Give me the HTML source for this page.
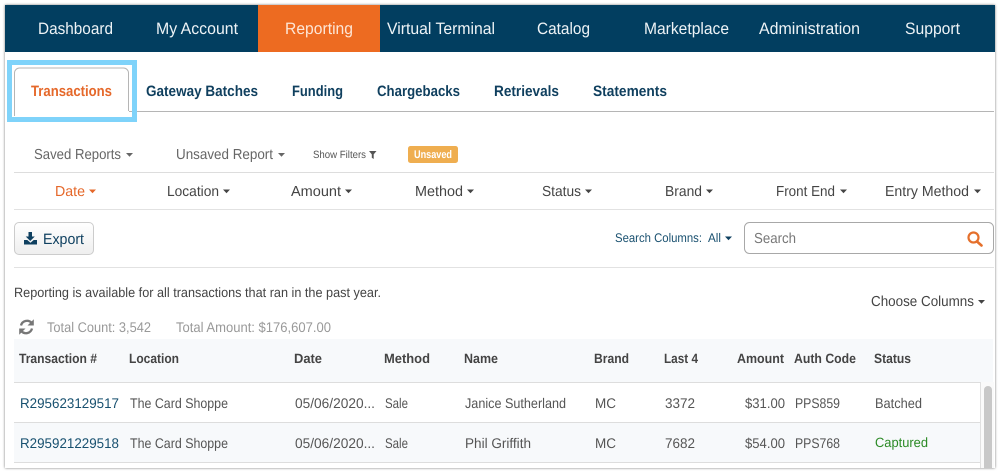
<!DOCTYPE html>
<html lang="en"><head><meta charset="utf-8"><title>Reporting</title>
<style>
html,body{margin:0;padding:0;background:#fff;width:1000px;height:473px;overflow:hidden}
svg{display:block;font-family:"Liberation Sans",sans-serif;filter:blur(.25px)}
text{text-rendering:geometricPrecision}
.n{font-size:16.5px;fill:#eef3f6}
.t{font-size:15px;font-weight:bold;fill:#0f3f5e}
.g{font-size:14.5px;fill:#666}
.f{font-size:14.5px;fill:#444}
.h{font-size:13.5px;font-weight:bold;fill:#444}
.c{font-size:14px;fill:#555}
.l{font-size:14px;fill:#17506f}
</style></head><body>
<svg width="1000" height="473" viewBox="0 0 1000 473" xmlns="http://www.w3.org/2000/svg">
<defs>
<linearGradient id="b" x1="0" y1="0" x2="0" y2="1"><stop offset="0" stop-color="#fff"/><stop offset="1" stop-color="#eeeeee"/></linearGradient>
<filter id="s" x="-2%" y="-2%" width="104%" height="104%"><feDropShadow dx="0" dy="0" flood-color="#000" flood-opacity=".55" stdDeviation="1.2"/></filter>
</defs>
<rect width="1000" height="473" fill="#fff"/>
<rect x="5" y="5" width="990" height="463" fill="#fff" filter="url(#s)"/>

<!-- top nav -->
<rect x="5" y="5" width="990" height="47" fill="#023e60"/>
<rect x="258" y="5" width="122" height="47" fill="#ed6b21"/>
<text class="n" x="38" y="34" textLength="75" lengthAdjust="spacingAndGlyphs">Dashboard</text>
<text class="n" x="156" y="34" textLength="82" lengthAdjust="spacingAndGlyphs">My Account</text>
<text class="n" x="285" y="34" textLength="68" lengthAdjust="spacingAndGlyphs" style="fill:#fde6d6">Reporting</text>
<text class="n" x="387" y="34" textLength="108" lengthAdjust="spacingAndGlyphs">Virtual Terminal</text>
<text class="n" x="537" y="34" textLength="53" lengthAdjust="spacingAndGlyphs">Catalog</text>
<text class="n" x="644" y="34" textLength="85" lengthAdjust="spacingAndGlyphs">Marketplace</text>
<text class="n" x="759" y="34" textLength="101" lengthAdjust="spacingAndGlyphs">Administration</text>
<text class="n" x="905" y="34" textLength="55" lengthAdjust="spacingAndGlyphs">Support</text>

<!-- tabs -->
<line x1="129" y1="111.5" x2="994" y2="111.5" stroke="#b5b5b5"/>
<path d="M14.5 116V73a5 5 0 0 1 5-5h104a5 5 0 0 1 5 5v38" fill="#fff" stroke="#b5b5b5"/>
<rect x="9.5" y="62.5" width="125" height="57" fill="none" stroke="#7fd3fa" stroke-width="5"/>
<text class="t" x="31" y="96" textLength="81" lengthAdjust="spacingAndGlyphs" style="fill:#e5682a">Transactions</text>
<text class="t" x="146" y="96" textLength="112" lengthAdjust="spacingAndGlyphs">Gateway Batches</text>
<text class="t" x="292" y="96" textLength="51" lengthAdjust="spacingAndGlyphs">Funding</text>
<text class="t" x="377" y="96" textLength="83" lengthAdjust="spacingAndGlyphs">Chargebacks</text>
<text class="t" x="494" y="96" textLength="65" lengthAdjust="spacingAndGlyphs">Retrievals</text>
<text class="t" x="593" y="96" textLength="74" lengthAdjust="spacingAndGlyphs">Statements</text>

<!-- report row -->
<text class="g" x="34" y="159" textLength="87" lengthAdjust="spacingAndGlyphs">Saved Reports</text>
<path d="M126 153h7l-3.500 3.800z" fill="#666"/>
<text class="g" x="176" y="159" textLength="97" lengthAdjust="spacingAndGlyphs">Unsaved Report</text>
<path d="M278 153h7l-3.500 3.800z" fill="#666"/>
<text x="313" y="158" textLength="53" lengthAdjust="spacingAndGlyphs" font-size="10.500" fill="#555">Show Filters</text>
<path d="M369 151h7.500l-2.800 3.400v4.600l-1.900-1.200v-3.400z" fill="#555"/>
<rect x="408" y="146" width="50" height="17" rx="2.500" fill="#efae50"/>
<text x="414" y="158" textLength="38" lengthAdjust="spacingAndGlyphs" font-size="11" font-weight="bold" fill="#fff">Unsaved</text>
<line x1="14" y1="172.500" x2="994" y2="172.500" stroke="#ddd"/>

<!-- filters -->
<g class="f">
<text class="f" x="55" y="196" textLength="30" lengthAdjust="spacingAndGlyphs" style="fill:#e5682a">Date</text>
<path d="M89 189.500h7l-3.500 3.800z" fill="#e5682a"/>
<text class="f" x="167" y="196" textLength="52" lengthAdjust="spacingAndGlyphs">Location</text>
<path d="M223 189.500h7l-3.500 3.800z" fill="#444"/>
<text class="f" x="291" y="196" textLength="50" lengthAdjust="spacingAndGlyphs">Amount</text>
<path d="M345 189.500h7l-3.500 3.800z" fill="#444"/>
<text class="f" x="415" y="196" textLength="48" lengthAdjust="spacingAndGlyphs">Method</text>
<path d="M467 189.500h7l-3.500 3.800z" fill="#444"/>
<text class="f" x="542" y="196" textLength="39" lengthAdjust="spacingAndGlyphs">Status</text>
<path d="M585 189.500h7l-3.500 3.800z" fill="#444"/>
<text class="f" x="665" y="196" textLength="37" lengthAdjust="spacingAndGlyphs">Brand</text>
<path d="M706 189.500h7l-3.500 3.800z" fill="#444"/>
<text class="f" x="776" y="196" textLength="59" lengthAdjust="spacingAndGlyphs">Front End</text>
<path d="M840 189.500h7l-3.500 3.800z" fill="#444"/>
<text class="f" x="885" y="196" textLength="84" lengthAdjust="spacingAndGlyphs">Entry Method</text>
<path d="M974 189.500h7l-3.500 3.800z" fill="#444"/>
</g>
<line x1="14" y1="209.500" x2="994" y2="209.500" stroke="#e2e2e2"/>

<!-- export -->
<rect x="14.500" y="222.500" width="79" height="32" rx="4.500" fill="url(#b)" stroke="#ccc"/>
<path d="M28.500 232h3.500v4.500h2.800l-4.550 4.500-4.550-4.500h2.800z M24 240h3.300l3.200 2.800 3.200-2.800H37v4.500H24z" fill="#0f4060"/>
<text x="43" y="244" textLength="41" lengthAdjust="spacingAndGlyphs" font-size="15" fill="#0f4060">Export</text>

<!-- search -->
<text x="615" y="242" textLength="87" lengthAdjust="spacingAndGlyphs" font-size="12.500" fill="#1a5170">Search Columns:</text>
<text x="708" y="242" textLength="13" lengthAdjust="spacingAndGlyphs" font-size="12.500" fill="#1a5170">All</text>
<path d="M725 236.500h7l-3.500 3.800z" fill="#0f4060"/>
<rect x="744.500" y="222.500" width="249" height="31" rx="5" fill="#fff" stroke="#a8a8a8"/>
<text x="754" y="243" textLength="42" lengthAdjust="spacingAndGlyphs" font-size="14.500" fill="#777">Search</text>
<circle cx="973.500" cy="237.500" r="5" fill="none" stroke="#e5702c" stroke-width="2.200"/>
<line x1="977" y1="241.500" x2="981.500" y2="245.500" stroke="#e5702c" stroke-width="2.600" stroke-linecap="round"/>
<line x1="14" y1="267.500" x2="994" y2="267.500" stroke="#e2e2e2"/>

<!-- info -->
<text x="14" y="297" textLength="367" lengthAdjust="spacingAndGlyphs" font-size="13.500" fill="#444">Reporting is available for all transactions that ran in the past year.</text>
<text x="871" y="306" textLength="103" lengthAdjust="spacingAndGlyphs" font-size="14.500" fill="#444">Choose Columns</text>
<path d="M978 300h7l-3.500 3.800z" fill="#444"/>
<path d="M21 325.500a6.200 6.200 0 0 1 10.500-2.800" fill="none" stroke="#777" stroke-width="2.300"/>
<path d="M33.800 319.200v6.300h-6.300z" fill="#777"/>
<path d="M32 328.500a6.200 6.200 0 0 1-10.500 2.800" fill="none" stroke="#777" stroke-width="2.300"/>
<path d="M19.200 334.800v-6.300h6.300z" fill="#777"/>
<text x="47" y="332" textLength="104" lengthAdjust="spacingAndGlyphs" font-size="14" fill="#999">Total Count: 3,542</text>
<text x="176" y="332" textLength="155" lengthAdjust="spacingAndGlyphs" font-size="14" fill="#999">Total Amount: $176,607.00</text>

<!-- table header -->
<rect x="14" y="339" width="979" height="43" fill="#f7f9fb"/>
<text class="h" x="19" y="363" textLength="78" lengthAdjust="spacingAndGlyphs">Transaction #</text>
<text class="h" x="129" y="363" textLength="50" lengthAdjust="spacingAndGlyphs">Location</text>
<text class="h" x="294" y="363" textLength="28" lengthAdjust="spacingAndGlyphs">Date</text>
<text class="h" x="384" y="363" textLength="46" lengthAdjust="spacingAndGlyphs">Method</text>
<text class="h" x="464" y="363" textLength="34" lengthAdjust="spacingAndGlyphs">Name</text>
<text class="h" x="594" y="363" textLength="35" lengthAdjust="spacingAndGlyphs">Brand</text>
<text class="h" x="664" y="363" textLength="34" lengthAdjust="spacingAndGlyphs">Last 4</text>
<text class="h" x="737" y="363" textLength="47" lengthAdjust="spacingAndGlyphs">Amount</text>
<text class="h" x="794" y="363" textLength="62" lengthAdjust="spacingAndGlyphs">Auth Code</text>
<text class="h" x="874" y="363" textLength="37" lengthAdjust="spacingAndGlyphs">Status</text>

<!-- table body -->
<rect x="14" y="382" width="966" height="86" fill="#fff"/>
<rect x="14" y="423" width="966" height="39" fill="#f7f9fb"/>
<line x1="14" y1="382.500" x2="980" y2="382.500" stroke="#ddd"/>
<line x1="14" y1="422.500" x2="980" y2="422.500" stroke="#ddd"/>
<line x1="14" y1="462.500" x2="980" y2="462.500" stroke="#ddd"/>
<line x1="980.500" y1="382" x2="980.500" y2="468" stroke="#e0e0e0"/>
<rect x="981" y="382" width="13" height="86" fill="#fafafa"/>
<path d="M984 468V390a4 4 0 0 1 8 0v78z" fill="#c8c8c8"/>

<text class="l" x="20" y="408" textLength="99" lengthAdjust="spacingAndGlyphs">R295623129517</text>
<text class="c" x="130" y="408" textLength="98" lengthAdjust="spacingAndGlyphs">The Card Shoppe</text>
<text class="c" x="295" y="408" textLength="80" lengthAdjust="spacingAndGlyphs">05/06/2020...</text>
<text class="c" x="385" y="408" textLength="23" lengthAdjust="spacingAndGlyphs">Sale</text>
<text class="c" x="465" y="408" textLength="101" lengthAdjust="spacingAndGlyphs">Janice Sutherland</text>
<text class="c" x="595" y="408" textLength="21" lengthAdjust="spacingAndGlyphs">MC</text>
<text class="c" x="665" y="408" textLength="30" lengthAdjust="spacingAndGlyphs">3372</text>
<text class="c" x="745" y="408" textLength="40" lengthAdjust="spacingAndGlyphs">$31.00</text>
<text class="c" x="795" y="408" textLength="45" lengthAdjust="spacingAndGlyphs">PPS859</text>
<text class="c" x="875" y="408" textLength="47" lengthAdjust="spacingAndGlyphs">Batched</text>

<text class="l" x="20" y="448" textLength="99" lengthAdjust="spacingAndGlyphs">R295921229518</text>
<text class="c" x="130" y="448" textLength="98" lengthAdjust="spacingAndGlyphs">The Card Shoppe</text>
<text class="c" x="295" y="448" textLength="80" lengthAdjust="spacingAndGlyphs">05/06/2020...</text>
<text class="c" x="385" y="448" textLength="23" lengthAdjust="spacingAndGlyphs">Sale</text>
<text class="c" x="465" y="448" textLength="66" lengthAdjust="spacingAndGlyphs">Phil Griffith</text>
<text class="c" x="595" y="448" textLength="21" lengthAdjust="spacingAndGlyphs">MC</text>
<text class="c" x="665" y="448" textLength="30" lengthAdjust="spacingAndGlyphs">7682</text>
<text class="c" x="745" y="448" textLength="40" lengthAdjust="spacingAndGlyphs">$54.00</text>
<text class="c" x="795" y="448" textLength="45" lengthAdjust="spacingAndGlyphs">PPS768</text>
<text x="875" y="447" textLength="53" lengthAdjust="spacingAndGlyphs" font-size="13.500" fill="#2b8a25">Captured</text>
</svg>
</body></html>
